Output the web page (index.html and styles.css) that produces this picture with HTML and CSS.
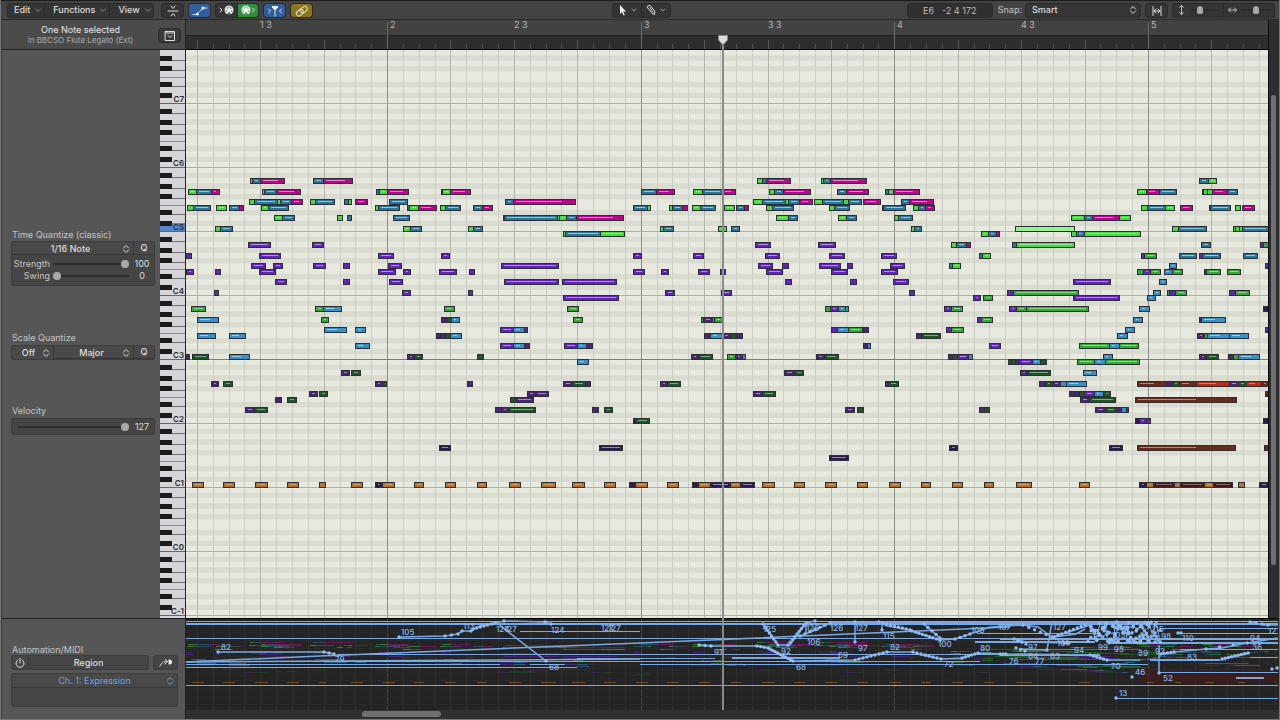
FILE: index.html
```html
<!DOCTYPE html>
<html lang="en">
<head>
<meta charset="utf-8">
<title>Piano Roll</title>
<link rel="stylesheet" href="styles.css">
</head>
<body>
<div class="window">
  <header class="toolbar">
    <div class="bar-left">
      <nav class="group menus">
        <button>Edit <svg class="chev" viewBox="0 0 8 8"><path d="M1.5 3 4 5.5 6.500 3"/></svg></button>
        <button>Functions <svg class="chev" viewBox="0 0 8 8"><path d="M1.5 3 4 5.5 6.500 3"/></svg></button>
        <button>View <svg class="chev" viewBox="0 0 8 8"><path d="M1.5 3 4 5.5 6.500 3"/></svg></button>
      </nav>
      <button class="icon" aria-label="Collapse mode"><svg viewBox="0 0 20 14"><path d="M5 7h10M8 2l2 2.500L12 2M8 12l2-2.500 2 2.500"/></svg></button>
      <button class="icon blue" aria-label="Show automation"><svg viewBox="0 0 20 14"><path d="M3 10.500h4M9 8l4-4M13 4h4"/><circle class="dot" cx="7.500" cy="10" r="1.500"/><circle class="dot" cx="13" cy="4" r="1.500"/></svg></button>
      <div class="group midi">
        <button aria-label="MIDI out"><svg viewBox="0 0 20 14"><path d="M3 5l2 2-2 2"/><circle class="dot" cx="12" cy="7" r="4.500"/><path class="cut" d="M9 8h.5M14.500 8h.5M10 5h.5M13.500 5h.5M12 3.500v.5M11 11.500v-1.500h2v1.500"/></svg></button>
        <button class="green" aria-label="MIDI in"><svg viewBox="0 0 20 14"><circle class="dot" cx="8" cy="7" r="4.500"/><path class="cutg" d="M5 8h.5M10.500 8h.5M6 5h.5M9.500 5h.5M8 3.500v.5M7 11.500v-1.500h2v1.500"/><path d="M14.500 5l2 2-2 2"/></svg></button>
      </div>
      <button class="icon blue" aria-label="Catch playhead"><svg viewBox="0 0 20 14"><path d="M3.500 5l2 2-2 2M16.500 5l-2 2 2 2M10 5v7"/><path class="dot" d="M7 2h6v1.500L10.500 6h-1L7 3.500z"/></svg></button>
      <button class="icon yellow" aria-label="Link"><svg viewBox="0 0 20 14"><g transform="rotate(-38 10 7)"><rect x="3.500" y="4.500" width="7.500" height="5" rx="2.500"/><rect x="8.500" y="4.500" width="7.500" height="5" rx="2.500"/></g></svg></button>
    </div>
    <div class="group tools">
      <button aria-label="Pointer tool"><svg viewBox="0 0 28 14"><path class="dot" d="M7 2v9l2-2 1.500 3.500 1.300-.6L10.300 8.500H13z"/><path class="dim" d="M19 6l2 2 2-2"/></svg></button>
      <button aria-label="Pencil tool"><svg viewBox="0 0 28 14"><path d="M6 3l2-.8 4.800 6-.3 3.300-2.800-1.500L5.500 4.500zM8 4.500l3 4.500"/><path class="dim" d="M19 6l2 2 2-2"/></svg></button>
    </div>
    <div class="bar-right">
      <output class="info"><span>E6</span><span>-2 4 172</span></output>
      <label class="snap" for="snap">Snap:</label>
      <div class="pick snap-pick"><select id="snap"><option>Smart</option></select><svg viewBox="0 0 8 10"><path d="M1.500 4 4 1.500 6.500 4M1.500 6 4 8.500 6.500 6"/></svg></div>
      <button class="icon" aria-label="Fit horizontally"><svg viewBox="0 0 20 14"><path d="M6 2.500v9M14 2.500v9M7 7h6M9 5L7 7l2 2M11 5l2 2-2 2"/></svg></button>
      <div class="group zooms">
        <label class="zoom"><svg viewBox="0 0 11 14"><path d="M5.500 2.500v9M3.500 4.500l2-2 2 2M3.500 9.500l2 2 2-2"/></svg><input type="range" value="28" aria-label="Vertical zoom"></label>
        <label class="zoom"><svg viewBox="0 0 11 14"><path d="M1.500 7h8M3.500 5l-2 2 2 2M7.500 5l2 2-2 2"/></svg><input type="range" value="50" aria-label="Horizontal zoom"></label>
      </div>
    </div>
  </header>

  <div class="work">
    <aside class="side">
      <div class="side-head">
        <div class="region-name"><strong>One Note selected</strong><span>in BBCSO Flute Legato (Ext)</span></div>
        <button class="icon" aria-label="Region inspector"><svg viewBox="0 0 20 14"><rect x="5.500" y="2.500" width="9" height="9"/><path d="M5.500 4h9M8 6.500l2 2 2-2"/></svg></button>
      </div>
      <div class="side-mid">
        <div class="inspector">
          <section>
            <h2>Time Quantize (classic)</h2>
            <div class="box">
              <div class="row">
                <div class="pick wide"><select aria-label="Time quantize"><option>1/16 Note</option></select><svg viewBox="0 0 8 10"><path d="M1.500 4 4 1.500 6.500 4M1.500 6 4 8.500 6.500 6"/></svg></div>
                <button class="q">Q</button>
              </div>
              <label class="slide"><span>Strength</span><input type="range" min="0" max="100" value="100"><output>100</output></label>
              <label class="slide"><span>Swing</span><input type="range" min="0" max="100" value="0"><output>0</output></label>
            </div>
          </section>
          <section>
            <h2>Scale Quantize</h2>
            <div class="box row">
              <div class="pick off"><select aria-label="Scale root"><option>Off</option></select><svg viewBox="0 0 8 10"><path d="M1.500 4 4 1.500 6.500 4M1.500 6 4 8.500 6.500 6"/></svg></div>
              <div class="pick wide"><select aria-label="Scale"><option>Major</option></select><svg viewBox="0 0 8 10"><path d="M1.500 4 4 1.500 6.500 4M1.500 6 4 8.500 6.500 6"/></svg></div>
              <button class="q">Q</button>
            </div>
          </section>
          <section>
            <h2>Velocity</h2>
            <div class="box velocity"><input type="range" min="0" max="127" value="127" aria-label="Velocity"><output>127</output></div>
          </section>
        </div>
        <svg class="keys" id="keys"></svg>
      </div>
      <div class="side-foot">
        <h2>Automation/MIDI</h2>
        <div class="foot-row">
          <div class="box row region">
            <button class="power" aria-label="Power"><svg viewBox="0 0 12 12"><path d="M6 1.500V6M3.800 2.900a4 4 0 1 0 4.400 0"/></svg></button>
            <button class="region-btn">Region</button>
          </div>
          <button class="box arrow" aria-label="Automation menu"><svg viewBox="0 0 20 12"><path d="M4 9c2-4 4-4.500 7-4.500M9 2.500l2.500 2L9 7"/><path class="dot" d="M12.500 2.500h1a2.500 2.500 0 0 1 0 5h-1z"/></svg></button>
        </div>
        <div class="box channel">
          <div class="pick"><select aria-label="Automation parameter"><option>Ch. 1: Expression</option></select><svg viewBox="0 0 8 10"><path d="M1.500 4 4 1.500 6.500 4M1.500 6 4 8.500 6.500 6"/></svg></div>
        </div>
      </div>
    </aside>

    <main class="editor">
      <div class="upper">
        <div class="score">
          <svg class="ruler" id="ruler"></svg>
          <svg class="roll" id="roll"></svg>
        </div>
        <div class="vscroll"><div class="vthumb"></div></div>
      </div>
      <svg class="lane" id="lane"></svg>
      <div class="playhead"><svg viewBox="0 0 10 10"><path d="M.5.500h9V5L6 9H4L.500 5z"/></svg></div>
      <div class="hscroll"><div class="hthumb"></div></div>
    </main>
  </div>
</div>
<script src="app.js"></script>
</body>
</html>
```
FILE: styles.css
```css
* { box-sizing: border-box; }
body { margin: 0; background: #666; color: #dedede; font: 9px/12px Inter, "Liberation Sans", sans-serif; }
button, select, input { font: inherit; color: inherit; margin: 0; padding: 0; border: 0; background: none; }
h2 { margin: 0; font: inherit; color: #c4c4c4; }
svg { display: block; }

.window { height: 100vh; min-height: 640px; display: flex; flex-direction: column; border: solid #777; border-width: 0 1px 1px; }
.toolbar { flex: 0 0 20px; display: grid; grid-template-columns: 1fr auto 1fr; align-items: center; padding: 0 5px 0 7px; background: #434343; border-top: 1px solid #1c1c1c; border-bottom: 1px solid #2a2a2a; }
.toolbar svg, .side svg { fill: none; stroke: #ddd; stroke-width: 1; stroke-linecap: round; stroke-linejoin: round; }
.toolbar svg .dot, .side svg .dot { fill: #eee; stroke: none; }
.toolbar svg .cut { stroke: #343434; }
.toolbar svg .cutg { stroke: #2e8a3a; }
.toolbar svg .dim { stroke: #999; }
.group, .icon, .pick, .info { background: #353535; border-radius: 3px; box-shadow: 0 0 0 1px #2b2b2b; }
.bar-left, .bar-right { display: flex; align-items: center; gap: 6px; }
.group { display: flex; height: 13px; }
.group button { display: flex; align-items: center; justify-content: center; height: 13px; }
.group button + button { border-left: 1px solid #292929; }
.menus { width: 145px; margin-right: 3px; }
.menus button { flex: 1 1 auto; justify-content: space-between; gap: 4px; padding: 0 2px 0 6px; font-weight: 500; }
.menus button + button { padding-left: 8px; }
.toolbar .menus .chev { width: 8px; height: 8px; stroke: #8c8c8c; }
.icon { flex: 0 0 21px; height: 13px; display: grid; place-items: center; }
.icon svg, .midi svg { width: 20px; height: 14px; }
.midi button { width: 21px; }
.blue { background: #2f5f9f; }
.green { background: #2f8f3b; border-radius: 0 3px 3px 0; }
.yellow { background: #8d7414; }
.tools svg { width: 28px; height: 14px; }
.bar-right { justify-content: flex-end; }
.info { width: 84px; height: 13px; display: flex; gap: 8px; justify-content: center; color: #bbb; background: #303030; line-height: 13px; }
.snap { color: #c4c4c4; }
.pick { display: grid; align-items: center; }
.pick > * { grid-area: 1 / 1; }
.pick select { appearance: none; width: 100%; height: 13px; text-align-last: center; outline: 0; font-weight: 500; }
.pick svg { width: 8px; height: 10px; margin-right: 3px; justify-self: end; pointer-events: none; }
.snap-pick { width: 114px; height: 13px; margin-left: -2px; }
.snap-pick select { text-align-last: left; padding-left: 6px; }
.zooms { width: 101px; }
.zoom { flex: 1; display: flex; align-items: center; justify-content: center; gap: 3px; }
.zoom + .zoom { border-left: 1px solid #292929; }
.toolbar .zoom svg { width: 11px; height: 14px; stroke: #bbb; }
.zoom input { width: 30px; }

input[type=range] { appearance: none; height: 9px; min-width: 0; }
input[type=range]::-webkit-slider-runnable-track { height: 2px; background: #2d2d2d; border-radius: 1px; }
input[type=range]::-webkit-slider-thumb { appearance: none; width: 8px; height: 8px; margin-top: -3px; border-radius: 50%; background: #aaa; }
.zoom input::-webkit-slider-thumb { width: 6px; border-radius: 50% 50% 2px 2px; }

.work { flex: 1; display: flex; min-height: 0; }
.side { flex: 0 0 185px; display: flex; flex-direction: column; background: #565656; border-left: 1px solid #3a3a3a; border-right: 1px solid #222; }
.side-head { flex: 0 0 30px; display: flex; align-items: center; padding: 2px 5px 1px 0; background: #4b4b4b; border-bottom: 1px solid #222; }
.region-name { flex: 1; text-align: center; display: grid; line-height: 10px; }
.region-name strong { font-weight: 400; color: #e8e8e8; }
.region-name span { font-size: 8px; color: #aaa; }
.side-head .icon { background: #3a3a3a; }
.side-mid { flex: 1; display: flex; min-height: 0; border-bottom: 1px solid #222; }
.inspector { flex: 1; padding: 179px 6px 0 10px; display: flex; flex-direction: column; }
.inspector section:nth-child(2) { margin-top: 47px; }
.inspector section:nth-child(3) { margin-top: 46px; }
.box { background: #454545; border-radius: 2px; box-shadow: 0 0 0 1px #3c3c3c; }
.inspector .box { margin-top: 1px; }
.inspector section + section .box { margin-top: 2px; }
.inspector section:first-child .box { height: 43px; }
.row { display: flex; height: 13px; }
.side .pick { background: #494949; box-shadow: none; border-radius: 2px; }
.row .wide { flex: 1; border-bottom: 1px solid #373737; }
.row .wide select { padding-right: 4px; }
.row .off { flex: 0 0 42px; border-right: 1px solid #373737; }
.row .off select { padding-right: 8px; }
.q { flex: 0 0 21px; background: #494949; border-left: 1px solid #373737; border-bottom: 1px solid #373737; font-weight: 500; }
.slide { display: grid; grid-template-columns: 38px 1fr 20px; align-items: center; gap: 5px 3px; height: 12px; padding-right: 2px; }
.slide span { text-align: right; color: #c4c4c4; }
.slide:nth-child(2) { margin-top: 3px; }
.slide input, .velocity input { width: 100%; }
.slide output, .velocity output { text-align: center; }
.velocity { display: grid; grid-template-columns: 1fr 20px; gap: 3px; align-items: center; height: 15px; padding: 0 2px 0 6px; }
.side .keys { flex: 0 0 25px; width: 25px; height: 100%; background: #d5d5d9; stroke: none; }
.side-foot { flex: 0 0 100px; padding: 25px 8px 0 10px; }
.foot-row { display: flex; gap: 6px; margin: 0 0 5px; }
.region { flex: 1; }
.power { flex: 0 0 17px; display: grid; place-items: center; border-right: 1px solid #373737; }
.power svg { width: 12px; height: 12px; }
.region-btn { flex: 1; font-weight: 500; }
.arrow { flex: 0 0 23px; height: 13px; display: grid; place-items: center; }
.arrow svg { width: 20px; height: 12px; }
.channel { height: 32px; color: #6ba3e0; }
.channel .pick { border-bottom: 1px solid #373737; }
.channel select { font-weight: 400; }
.side .channel svg { stroke: #6ba3e0; }

.editor { flex: 1; min-width: 0; position: relative; display: flex; flex-direction: column; background: #333; }
.upper { flex: 1; min-height: 0; display: flex; }
.score { flex: 1; min-width: 0; display: flex; flex-direction: column; border-right: 1px solid #0c0c0c; }
.ruler { width: 100%; height: 30px; flex: none; background: linear-gradient(#424242 15px, #222 15px, #222 16px, #2e2e2e 16px, #2e2e2e 29px, #000 29px); }
.ruler text { fill: #bbb; font-size: 9px; }
.roll { width: 100%; flex: 1; min-height: 0; background: #e7e8de; }
.vscroll { flex: 0 0 10px; padding: 75px 3px 53px 2px; display: flex; background: #2e2e2e; }
.vthumb { flex: 1; border-radius: 3px; background: #707070; }
.keys text { fill: #2c2c2e; font-size: 8px; font-weight: 600; }
.lane { flex: 0 0 92px; width: 100%; background: #242424; border-top: 1px solid #000; }
.lane text { fill: #8db9ee; font-size: 8px; font-weight: 500; }
.hscroll { flex: 0 0 9px; padding: 1px 0 2px 176px; background: #303030; }
.hthumb { width: 79px; height: 6px; border-radius: 3px; background: #707070; }
.playhead { position: absolute; left: 536px; top: 15px; bottom: 9px; width: 2px; background: #8a8a86; }
.playhead svg { position: absolute; left: -4px; width: 10px; height: 10px; fill: #ddd; stroke: #888; }
```
FILE: app.js
```js
const LEFT = 186, TOP = 50, LANE_TOP = 619;
const WIDTH = 2600;
const BAR = 253.6, BAR2_X = 387.4, STEP = BAR / 16;
const C5_BOTTOM = 231.33, ROW = 64 / 12;
const colors = {
  g: '#48d940', b: '#2f7598', m: '#b8068f', p: '#6224ba', G: '#35a835', B: '#3a8fc4',
  v: '#4b2573', d: '#1f5428', o: '#ba722b', n: '#2c1d4b', r: '#6a2920', R: '#b42d1b',
  L: '#97f28d', k: '#45191b'
};
const lights = {
  g: '#8df086', b: '#86c8e8', m: '#ee7fd6', p: '#b68cf5', G: '#84dd84', B: '#8fd0f5',
  v: '#a583d6', d: '#6fae78', o: '#dd9c55', n: '#9484c6', r: '#c08078', R: '#e8705e', k: '#8f6266'
};

// semitones from C5 -> chains of "x colour x colour x"
const notes = {
  9: '250g253b261m285 313b324m353 757g763b767m791 821g824b831m867 1199b1209g1217',
  7: '188g197b212m220 262g265b277m301 376b380g388m409 441b443g451m471 641b657m675 693g703b723m736 769g775b784m811 837b847m869 885b889g894m920 1137g1147m1160b1177 1202b1204g1208g1213m1228b1238',
  5: '249g255b278g281b292m303 310g316b335 344b349g352 355m368 389b408 505b514m576 753g763b786g789b800m813 814g823b844g849b862 863m881 901b910m934',
  4: '187g194b211 216g227 229b240m244 261g269b289 375g379b400 407b410g419m437 440g446b461 473b483m493 633b648g651 669g673b683m688 692g701b716 724g735 736b745m749 766g773b794 829g835b850 882g884b906 913g919b926m935 1141g1148b1166g1175 1180m1193 1209g1211b1231 1235g1241 1242m1255',
  2: '274g283b295 337g343 347b352 393b410 503g505b558g560g567b577m624 776g789b798 838g847b857 894g899b913 1071g1085b1093m1120g1131',
  0: '215g221b233 403g411b422 468g474b483 660g664b674 718g727 731b740 911g915b922 1015L1075 1172g1179b1207 1233g1236g1240g1243b1269',
  '-1': '563g566b601g625 981g989b997m1000 1071g1077b1085g1141',
  '-3': '248p271 312p324 755p771 818p836 951g957b967m971 1012b1017g1075 1201b1211 1260p1264G1269',
  '-5': '186p192 259p281 378p394 441p450 633p642 693p704 765p780 829p845 881p897 979b983g991 1141p1145G1157 1179b1197 1199p1203b1221 1243b1258',
  '-7': '251p266 273p283 313p326 343p350 388p402 501p559 758p773 782p789 819p841 847p853 890p905 949b953g961 1169B1177 1265p1269',
  '-8': '186p194 215p221 259p276 378p396 403p411 439p457 469p475 633p645 661p669 698p710 720p726 766p783 831p848 881p898 1137G1144p1151G1161 1164B1173G1183 1204d1207G1221 1227G1241',
  '-10': '275p287 343p350 389p403 504p559 562p617 785p792 850p857 893p909 1073p1111 1159B1167',
  '-12': '214p219 402p411 468p473 665p675 721p732 909p915 1007p1014G1079 1153B1161 1167G1170p1176G1187 1229p1236G1250',
  '-13': '563p619 973p981 983G993 1073p1120 1147B1156',
  '-15': '191G206 315G324B342 444G455 567G579 825G831p839B846G849 944p952G963 1009p1017G1027G1089 1139B1150 1263n1269',
  '-17': '197B219 321G329 441v448d452B460 573G583 701G704v713B715G723 977p982G993 1133B1143 1199v1202B1226',
  '-19': '324B347 355B366 500p514B525p528 831p838B849G863v869 946p952G964 1125B1135 1265p1269',
  '-20': '197B216 229B246 436v441v446d451B462 704v711B723v731d737v743 916v922d941 1117B1128 1197v1205G1208B1230B1249',
  '-22': '355B370 500p514B525v530 564p578B587v593 863v868B871 989p1001 1079G1110B1120G1139',
  '-24': '186v190 192d209 229B250 407v415d423 477d484 691v699d713 727G736v743B746 816v825d839 948v953d958p969B973 1103B1113 1199v1207d1219 1228v1234G1239B1260',
  '-25': '577B589 1008d1012d1016v1020p1033B1041d1047 1077G1095B1106G1140',
  '-27': '341v350 351d361 784v795d804 1020v1028d1051 1083B1097',
  '-29': '211v219 223d233 375v383d387 467v473 563v573d586v591 660v668d681 885v889d899 1039v1046d1053v1061B1067B1087 1137r1167v1173d1180r1197R1230v1239d1247R1262r1269',
  '-31': '309v318 319d328 527v536v549 753v763d776 1069v1075v1080d1085p1095B1104d1111 1265r1269',
  '-32': '275v282 287d297 510d516v534 1080v1090d1116 1135r1237',
  '-34': '245v255d268 495v502v509d536 592v599 604d613 845v855 857d864 979v985d990 1095v1106d1117v1122B1127d1129',
  '-36': '633n636d650 1135n1140p1147p1151 1263n1269',
  '-41': '439n451 599n623 949n958 1109n1123 1137r1236 1264r1269',
  '-43': '829n849',
  '-48': '192o204 223o235 255o268 287o299 319o326 351o363 375n383o395 414o424 445o456 477o487 509o521 541o556 572o585 604o616 629n636o648 667o679 692n699o711n731o741n755 762o775 794o805 825o837 857o868 889o901 921o931 952o963 984o994 1016o1032 1079o1090 1139n1147o1154k1175o1181k1205o1214k1233 1238o1245 1259n1269'
};
const chains = [];
for (const pitch of Object.keys(notes)) {
  for (const text of notes[pitch].split(' ')) {
    const xs = text.match(/\d+/g).map(n => n - LEFT);
    chains.push({ pitch: +pitch, xs, tones: text.match(/[a-zA-Z]/g) });
  }
}
chains.sort((a, b) => b.pitch - a.pitch);

const rect = (x, y, w, h, fill, extra = '') => `<rect x="${x}" y="${y}" width="${w}" height="${h}" fill="${fill}" ${extra}/>`;
const put = (id, markup) => { document.getElementById(id).innerHTML = markup; };
const stepX = k => Math.round(BAR2_X - LEFT + k * STEP - 0.3);

function drawRuler() {
  const width = document.getElementById('ruler').clientWidth;
  let s = '';
  for (let k = -12; stepX(k) < width - 8; k++) {
    const x = stepX(k);
    const bar = k % 16 === 0;
    const y = bar ? 2 : k % 4 === 0 ? 20 : 24;
    s += rect(x, y, 1, 29 - y, bar ? '#6a6a6a' : '#555');
    if (bar) s += `<text x="${x + 3}" y="8">${2 + k / 16}</text>`;
    else if ((k + 8) % 16 === 0) s += `<text x="${x}" y="8">${Math.floor(2 + k / 16)} 3</text>`;
  }
  put('ruler', s);
}

function drawKeys() {
  let s = '';
  for (let p = -78; p < 42; p++) {
    const n = ((p % 12) + 12) % 12;
    const bottom = C5_BOTTOM - TOP + 1 - p * ROW;
    if (p === 0) s += rect(0, Math.round(bottom - 9), 25, 8, '#5686cc');
    if (n === 0 || n === 5) s += rect(0, Math.round(bottom - 1), 25, 1, n ? '#8c8c90' : '#66666a');
  }
  for (let p = -78; p < 42; p++) {
    const n = ((p % 12) + 12) % 12;
    const bottom = C5_BOTTOM - TOP + 1 - p * ROW;
    if ([1, 3, 6, 8, 10].includes(n)) {
      if (n !== 1) s += rect(11, Math.round(bottom - 2), 14, 1, '#707074');
      s += rect(0, Math.round(bottom - 6), 12, 5, '#1b1b1b');
    }
    if (n === 0 && p >= -72 && p < 36) {
      s += `<text x="24" y="${Math.round(bottom - 2)}" text-anchor="end">C${5 + p / 12}</text>`;
    }
  }
  put('keys', s);
}

function drawRoll() {
  let s = '';
  for (let p = -90; p < 42; p++) {
    const n = ((p % 12) + 12) % 12;
    const bottom = C5_BOTTOM - TOP - p * ROW;
    if ([1, 3, 6, 8, 10].includes(n)) s += rect(0, bottom - ROW, WIDTH, ROW, '#dadbd1');
  }
  for (let k = -12; k < 140; k++) {
    s += rect(stepX(k), 0, 1, 1200, k % 16 === 0 ? '#8d8e88' : k % 4 === 0 ? '#b3b4ac' : '#cbccc3');
  }
  for (let o = -8; o < 4; o++) s += rect(0, Math.round(C5_BOTTOM - TOP - o * 64), WIDTH, 1, o === -2 ? '#7b7c77' : '#acada5');
  for (const c of chains) {
    const y = Math.round(C5_BOTTOM - TOP + 0.33 - (c.pitch + 0.5) * ROW - 3);
    const last = c.xs.length - 1;
    s += rect(c.xs[0], y, c.xs[last] - c.xs[0], 6, '#2c3034');
    c.tones.forEach((t, i) => {
      const x = c.xs[i] + (i ? 0 : 1), w = c.xs[i + 1] - 1 - x;
      s += rect(x, y + 1, w, 4, colors[t]);
      if (w >= 6 && t !== 'L') {
        const share = 'rRB'.includes(t) ? 0.6 : 'm'.includes(t) ? 0.8 : 1;
        s += rect(x + 2, y + 2, Math.max(2, Math.round((w - 4) * share)), 1, lights[t]);
      }
    });
  }
  put('roll', s);
}

function drawLane() {
  const X = x => x - LEFT, Y = y => y - LANE_TOP;
  let s = '';
  for (let k = -12; k < 140; k++) s += rect(stepX(k), 0, 1, 91, k % 16 === 0 ? '#444' : '#2f2f2f');
  for (let y = 632; y < 710; y += 8) s += rect(0, Y(y), WIDTH, 1, '#292929');
  for (const c of chains) {
    c.tones.forEach((t, i) => {
      s += rect(c.xs[i], Math.round(Y(648.5 - c.pitch * 0.7)), c.xs[i + 1] - c.xs[i], 1, colors[t], 'opacity=".5"');
    });
  }
  s += rect(X(1140), Y(669), 138, 12, '#4a1714', 'opacity=".6"');
  for (let i = 0; i < 16; i++) s += rect(X(985 + i * 9), Y(649 + (i * 7) % 20), 36, 1, '#1f5c24');
  const flat = [
    [186, 1278, 621, 1], [186, 1278, 623, 2], [186, 1278, 638, 1], [337, 1000, 654, 1], [186, 980, 661, 1],
    [186, 500, 664, 1], [530, 565, 664, 1], [640, 795, 664, 1], [186, 577, 667, 1], [186, 1278, 685, 1], [577, 715, 658, 1], [732, 840, 657, 2], [795, 1090, 664, 1],
    [830, 1150, 621, 4], [520, 640, 631, 1], [975, 1095, 641, 2], [977, 1100, 633, 1], [1000, 1278, 638, 2], [1110, 1278, 642, 2],
    [1001, 1148, 664, 1], [1116, 1278, 698, 1], [1159, 1278, 672, 1], [1236, 1264, 677, 2], [1000, 1100, 654, 2],
    [1180, 1278, 633, 1], [1180, 1278, 649, 1], [1150, 1220, 659, 2], [1160, 1278, 628, 1], [1250, 1278, 657, 1]
  ];
  for (const [a, b, y, h] of flat) s += rect(X(a), Y(y), b - a, h, '#79a9e4');
  const paths = [
    '186,662 320,656 640,643 1010,627',
    '186,662 500,660 640,659',
    '498,624 546,661',
    '399,637 445,636 458,634 462,631 471,631 480,626 495,623 504,621 545,622 551,624',
    '218,652 324,652 334,654',
    '699,645 711,646 757,646 768,648 780,655 793,661 855,660 870,656 887,652 913,652 922,655 941,659 962,658 978,653 1006,654 1090,655 1107,660 1140,660',
    '763,624 778,645 790,645 806,623 815,621',
    '763,629 768,626',
    '800,636 813,631 830,623', '806,623 806,633', '855,622 855,642', '882,623 882,630',
    '879,622 887,626 910,630 930,637 940,640 955,639 970,634 990,627 1023,625',
    '924,624 940,638',
    '1023,625 1038,627 1052,637 1075,630 1090,625', '1052,622 1047,650 1020,649',
    '1014,639 1026,642 1068,643', '1054,637 1076,634 1085,629',
    '1159,645 1159,673', '1161,654 1174,652 1206,649 1222,648 1232,646 1247,643 1278,638',
    '1222,659 1240,655 1250,653', '1250,622 1264,625 1278,625'
  ];
  for (const p of paths) {
    const pts = p.split(' ').map(q => q.split(',').map(Number)).map(([x, y]) => [X(x), Y(y)]);
    s += `<polyline points="${pts.join(' ')}" fill="none" stroke="#79a9e4" stroke-width="1.500"/>`;
  }
  // sampled breakpoints along the curved stretches
  const beads = [
    [218, 652, 218, 652, 1], [324, 652, 334, 654, 3], [399, 637, 399, 637, 1], [445, 636, 458, 634, 3], [462, 631, 471, 631, 2],
    [473, 629, 495, 623, 7], [504, 621, 504, 621, 1], [545, 622, 551, 624, 2], [546, 661, 546, 661, 1],
    [699, 645, 711, 646, 3], [757, 646, 768, 648, 4], [770, 649, 793, 661, 10], [855, 660, 887, 652, 9], [913, 652, 941, 659, 8],
    [962, 658, 978, 653, 6], [1000, 654, 1006, 654, 3], [1090, 655, 1107, 660, 6], [763, 624, 778, 645, 8], [788, 645, 806, 623, 9],
    [800, 636, 830, 623, 7], [815, 621, 815, 621, 1], [855, 622, 855, 642, 2], [882, 630, 882, 630, 1], [879, 622, 910, 630, 9],
    [912, 631, 940, 640, 9], [924, 624, 940, 638, 5], [955, 639, 970, 634, 4], [1023, 625, 1052, 637, 6], [1054, 637, 1085, 625, 9],
    [1014, 639, 1026, 644, 4], [1016, 648, 1025, 651, 3], [1064, 643, 1069, 643, 3], [1047, 650, 1047, 650, 1],
    [1161, 654, 1174, 652, 5], [1222, 659, 1248, 653, 9], [1206, 649, 1247, 643, 4], [1250, 622, 1268, 625, 4],
    [1116, 698, 1116, 698, 1], [1132, 677, 1132, 677, 1], [1159, 673, 1159, 673, 1], [1272, 669, 1277, 668, 2], [1178, 633, 1181, 633, 2]
  ];
  const dot = (x, y) => `<circle cx="${X(x)}" cy="${Y(y)}" r="1.700" fill="#8fbcf5"/>`;
  for (const [x0, y0, x1, y1, n] of beads) {
    for (let i = 0; i < n; i++) {
      const f = n > 1 ? i / (n - 1) : 0;
      s += dot(x0 + (x1 - x0) * f, y0 + (y1 - y0) * f);
    }
  }
  // dense cluster of overlapping controller curves
  let seed = 7;
  const rnd = () => (seed = (seed * 16807) % 2147483647) / 2147483647;
  let line = [];
  for (let i = 0; i < 110; i++) {
    const x = 1088 + (i % 37) * 1.9 + rnd() * 4, y = 622 + rnd() * 21;
    if (i % 2) line.push(`${X(x)},${Y(y)}`);
    s += dot(x, y);
    if (i % 37 === 36) { s += `<polyline points="${line.join(' ')}" fill="none" stroke="#79a9e4"/>`; line = []; }
  }
  const labels = [
    [82, 221, 650], [79, 335, 662], [105, 401, 635], [113, 463, 629], [124, 496, 632], [127, 504, 632], [124, 551, 633], [127, 601, 631], [127, 608, 631], [68, 549, 670],
    [91, 714, 655], [125, 763, 632], [92, 781, 654], [106, 807, 645], [126, 830, 631], [126, 806, 631], [127, 855, 631], [97, 858, 651], [69, 838, 658], [68, 796, 670],
    [115, 883, 639], [82, 890, 650], [100, 938, 647], [72, 944, 667], [108, 971, 633], [107, 998, 630], [80, 980, 651], [97, 1028, 650], [76, 1009, 664], [77, 1035, 664],
    [64, 1028, 659], [83, 1050, 659], [101, 1057, 646], [127, 1053, 630], [94, 1074, 653], [99, 1098, 650], [95, 1114, 652], [103, 1112, 638], [70, 1111, 669],
    [89, 1138, 656], [92, 1155, 654], [98, 1161, 639], [115, 1152, 632], [110, 1182, 641], [83, 1187, 660], [94, 1250, 641], [36, 1252, 650], [12, 1268, 634], [46, 1135, 675], [52, 1163, 681], [13, 1119, 696]
  ];
  for (const [t, x, y] of labels) s += `<text x="${X(x)}" y="${Y(y)}">${t}</text>`;
  put('lane', s);
}

drawRuler();
drawKeys();
drawRoll();
drawLane();
window.addEventListener('resize', drawRuler);
```
